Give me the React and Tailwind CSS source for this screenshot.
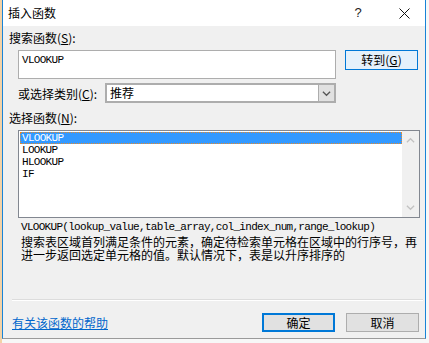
import React from "react";

const cjk = "font-['Noto_Sans_CJK_SC','Liberation_Sans',sans-serif]";
const mono = "font-['Liberation_Mono','Noto_Sans_CJK_SC',monospace] text-[11px] tracking-[-0.7px]";

function Chevron({ up, color = "#606060", size = 9 }) {
  return (
    <svg width={size} height={size} viewBox="0 0 10 10">
      <path
        d={up ? "M1 7 L5 3 L9 7" : "M1 3 L5 7 L9 3"}
        fill="none"
        stroke={color}
        strokeWidth="1.4"
      />
    </svg>
  );
}

function Label({ text, hot, after }) {
  // hot = underlined accelerator letter
  return (
    <span className={`${cjk} text-[12px] leading-[14px] text-[#000]`}>
      {text}(<span className="underline">{hot}</span>){after}
    </span>
  );
}

export default function App() {
  const funcs = ["VLOOKUP", "LOOKUP", "HLOOKUP", "IF"];

  return (
    <div className="w-[429px] h-[343px] bg-[#f7f7f7] flex overflow-hidden">
      <div className="w-[2px] h-full bg-[#f3d2a6]" />
      <div className="w-[424px] h-[339px] flex flex-col bg-[#f0f0f0] border-l border-r border-b border-l-[#1883d7] border-r-[#1883d7] border-b-[#9a9a9a]">
        {/* title bar */}
        <div className="h-[26px] bg-white flex items-center pl-[5px] shrink-0">
          <span className={`${cjk} text-[12px] leading-[14px] text-black`}>插入函数</span>
          <span className="ml-auto w-[20px] text-center font-['Liberation_Sans',sans-serif] text-[13px] text-[#222]">?</span>
          <span className="ml-[30px] mr-[15px] w-[12px] h-[12px] flex items-center justify-center">
            <svg width="11" height="11" viewBox="0 0 11 11">
              <path d="M0.5 0.5 L10.5 10.5 M10.5 0.5 L0.5 10.5" stroke="#111" strokeWidth="1" />
            </svg>
          </span>
        </div>

        <div className="flex flex-col pl-[6px] pr-[4px]">
          <div className="mt-[5px] h-[14px] flex items-center">
            <Label text="搜索函数" hot="S" after=":" />
          </div>

          <div className="mt-[5px] flex items-start">
            <div className="ml-[9px] w-[318px] h-[29px] bg-white border border-[#adadad] px-[3px] pt-[3px]">
              <div className={`${mono} leading-[12px] text-black`}>VLOOKUP</div>
            </div>
            <button className="ml-[9px] w-[73px] h-[20px] bg-[#e5f1fb] border border-[#0078d7] flex items-center justify-center">
              <span className={`${cjk} text-[12px] leading-[14px] text-black`}>
                转到(<span className="underline">G</span>)
              </span>
            </button>
          </div>

          <div className="mt-[4px] ml-[9px] flex items-center h-[20px]">
            <span className="w-[87px]">
              <Label text="或选择类别" hot="C" after=":" />
            </span>
            <div className="w-[231px] h-[20px] bg-white border-2 border-[#adadad] flex">
              <span className={`${cjk} flex-1 pl-[3px] text-[12px] leading-[16px] text-black`}>推荐</span>
              <span className="w-[16px] h-full bg-[#e1e1e1] border-l border-[#adadad] flex items-center justify-center">
                <Chevron color="#555" />
              </span>
            </div>
          </div>

          <div className="mt-[8px] h-[14px] flex items-center">
            <Label text="选择函数" hot="N" after=":" />
          </div>

          <div className="mt-[5px] ml-[9px] w-[402px] h-[88px] bg-white border border-[#828790] flex">
            <div className="flex-1 pl-[1px] pt-[1px] flex flex-col">
              {funcs.map((f, i) => (
                <div
                  key={f}
                  className={
                    i === 0
                      ? "h-[12px] bg-[#3399ff] border border-dotted border-[#e88a2a] flex items-center pl-[1px]"
                      : "h-[12px] flex items-center pl-[2px]"
                  }
                >
                  <span className={`${mono} leading-[12px] ${i === 0 ? "text-white" : "text-black"}`}>{f}</span>
                </div>
              ))}
            </div>
            <div className="w-[17px] h-full bg-[#f0f0f0] flex flex-col items-center justify-between py-[5px]">
              <Chevron up color="#c2c2c2" />
              <Chevron color="#c2c2c2" />
            </div>
          </div>

          <div className="mt-[3px] ml-[12px] h-[12px] flex items-center">
            <span className={`${mono} leading-[12px] text-black whitespace-nowrap`}>
              VLOOKUP(lookup_value,table_array,col_index_num,range_lookup)
            </span>
          </div>

          <div className={`ml-[12px] mt-[2px] ${cjk} text-[12px] leading-[13px] text-black whitespace-nowrap`}>
            <div className="h-[13px]">搜索表区域首列满足条件的元素，确定待检索单元格在区域中的行序号，再</div>
            <div className="h-[13px]">进一步返回选定单元格的值。默认情况下，表是以升序排序的</div>
          </div>

          <div className="mt-[38px] ml-[3px] w-[411px] h-[2px] border-t border-[#dcdcdc] border-b border-b-white" />

          <div className="mt-[12px] ml-[3px] flex items-center">
            <a className={`${cjk} text-[12px] leading-[14px] text-[#0066cc] underline`}>有关该函数的帮助</a>
            <button className="ml-auto w-[73px] h-[19px] bg-[#e1e1e1] border-2 border-[#0078d7] flex items-center justify-center">
              <span className={`${cjk} text-[12px] leading-[14px] text-black`}>确定</span>
            </button>
            <button className="ml-[11px] mr-[2px] w-[73px] h-[19px] bg-[#e1e1e1] border border-[#adadad] flex items-center justify-center">
              <span className={`${cjk} text-[12px] leading-[14px] text-black`}>取消</span>
            </button>
          </div>
        </div>
      </div>
      <div className="flex-1 h-full bg-[#f7f7f7]" />
    </div>
  );
}
